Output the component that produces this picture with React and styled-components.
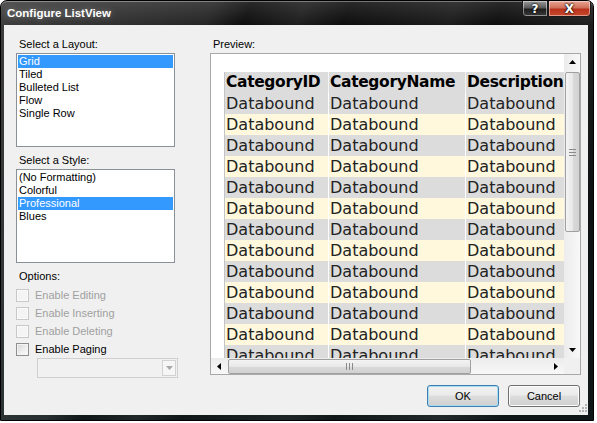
import React from 'react'
import styled, { createGlobalStyle } from 'styled-components'

const layouts = ['Grid', 'Tiled', 'Bulleted List', 'Flow', 'Single Row']
const styles = ['(No Formatting)', 'Colorful', 'Professional', 'Blues']
const options = [
  { label: 'Enable Editing', disabled: true },
  { label: 'Enable Inserting', disabled: true },
  { label: 'Enable Deleting', disabled: true },
  { label: 'Enable Paging', disabled: false },
]
const rows = Array.from({ length: 13 }, (_, i) => i)

const App = () => {
  return (
    <>
      <GlobalStyle />
      <Window>
        <TitleBar>
          <Title>Configure ListView</Title>
          <Caption>
            <CapButton>?</CapButton>
            <CapButton close>X</CapButton>
          </Caption>
        </TitleBar>
        <Body>
          <LeftCol>
            <Label>Select a Layout:</Label>
            <ListBox>
              {layouts.map((l, i) => (
                <Item key={l} selected={i === 0}>{l}</Item>
              ))}
            </ListBox>
            <Label spaced>Select a Style:</Label>
            <ListBox>
              {styles.map(s => (
                <Item key={s} selected={s === 'Professional'}>{s}</Item>
              ))}
            </ListBox>
            <Label spaced>Options:</Label>
            <Options>
              {options.map(o => (
                <CheckRow key={o.label} disabled={o.disabled}>
                  <Box disabled={o.disabled} />
                  {o.label}
                </CheckRow>
              ))}
            </Options>
            <Combo>
              <ComboArrow>
                <svg width="7" height="4" viewBox="0 0 7 4"><path d="M0 0h7L3.5 4z" fill="#a8a8a8" /></svg>
              </ComboArrow>
            </Combo>
          </LeftCol>

          <RightCol>
            <Label>Preview:</Label>
            <Preview>
              <Viewport>
                <Grid>
                  <colgroup>
                    <col style={{ width: 104 }} />
                    <col style={{ width: 137 }} />
                    <col style={{ width: 104 }} />
                  </colgroup>
                  <thead>
                    <tr>
                      <Th>CategoryID</Th>
                      <Th>CategoryName</Th>
                      <Th>Description</Th>
                    </tr>
                  </thead>
                  <tbody>
                    {rows.map(r => (
                      <Tr key={r} alt={r % 2 === 1}>
                        <Td>Databound</Td>
                        <Td>Databound</Td>
                        <Td>Databound</Td>
                      </Tr>
                    ))}
                  </tbody>
                </Grid>
              </Viewport>
              <VScroll>
                <Arrow>
                  <svg width="7" height="4" viewBox="0 0 7 4"><path d="M0 4h7L3.5 0z" fill="#000" /></svg>
                </Arrow>
                <VThumb>
                  <Grip vertical />
                </VThumb>
                <Spacer />
                <Arrow>
                  <svg width="7" height="4" viewBox="0 0 7 4"><path d="M0 0h7L3.5 4z" fill="#000" /></svg>
                </Arrow>
              </VScroll>
              <HScroll>
                <Arrow>
                  <svg width="4" height="7" viewBox="0 0 4 7"><path d="M4 0v7L0 3.5z" fill="#000" /></svg>
                </Arrow>
                <HThumb>
                  <Grip />
                </HThumb>
                <Spacer />
                <Arrow>
                  <svg width="4" height="7" viewBox="0 0 4 7"><path d="M0 0v7L4 3.5z" fill="#000" /></svg>
                </Arrow>
              </HScroll>
              <Corner />
            </Preview>
            <Buttons>
              <Button primary>OK</Button>
              <Button>Cancel</Button>
            </Buttons>
          </RightCol>
          <ResizeGrip>
            <svg width="10" height="10" viewBox="0 0 10 10">
              <g fill="#b4b4b4">
                <rect x="8" y="0" width="2" height="2" />
                <rect x="5" y="3" width="2" height="2" />
                <rect x="8" y="3" width="2" height="2" />
                <rect x="2" y="6" width="2" height="2" />
                <rect x="5" y="6" width="2" height="2" />
                <rect x="8" y="6" width="2" height="2" />
              </g>
            </svg>
          </ResizeGrip>
        </Body>
      </Window>
    </>
  )
}

const GlobalStyle = createGlobalStyle`
  html, body {
    margin: 0;
    padding: 0;
    background: #fff;
  }
  body {
    font-family: "Liberation Sans", Arial, sans-serif;
    font-size: 11px;
    color: #000;
  }
`

const Window = styled.div`
  width: 594px;
  height: 421px;
  box-sizing: border-box;
  padding: 0 5px 5px 3px;
  display: flex;
  flex-direction: column;
  border-radius: 7px 7px 0 0;
  overflow: hidden;
  background:
    linear-gradient(112deg,
      rgba(255,255,255,0.20) 0%, rgba(255,255,255,0.10) 28%,
      rgba(255,255,255,0) 33%, rgba(255,255,255,0.07) 40%,
      rgba(255,255,255,0) 46%, rgba(255,255,255,0.06) 60%,
      rgba(255,255,255,0) 66%, rgba(255,255,255,0.08) 80%,
      rgba(255,255,255,0) 88%),
    linear-gradient(180deg, #2a2a2a 0px, #0c0c0c 25px, #0f1719 100%);
  border: 1px solid #000;
  box-shadow: inset 0 1px 0 rgba(255,255,255,0.35);
`

const TitleBar = styled.div`
  height: 24px;
  display: flex;
  justify-content: space-between;
  align-items: flex-start;
  margin-right: -3px;
`

const Title = styled.div`
  padding: 6px 0 0 3px;
  color: #fff;
  font-weight: bold;
  font-size: 11.5px;
  text-shadow: 0 0 6px rgba(255,255,255,0.35);
`

const Caption = styled.div`
  display: flex;
  margin-top: -1px;
`

const CapButton = styled.div`
  width: ${p => (p.close ? '43px' : '26px')};
  height: 17px;
  box-sizing: border-box;
  display: flex;
  align-items: center;
  justify-content: center;
  color: #fff;
  font-family: "DejaVu Sans", sans-serif;
  font-weight: bold;
  font-size: 12px;
  text-shadow: 0 0 2px #000, 0 0 2px #000;
  border: 1px solid #1a1a1a;
  box-shadow: inset 0 0 0 1px rgba(255,255,255,0.45);
  border-radius: ${p => (p.close ? '0 0 4px 0' : '0 0 0 4px')};
  background: ${p =>
    p.close
      ? 'linear-gradient(180deg, #e8a593 0%, #d0705a 45%, #b8321c 55%, #c94a2c 100%)'
      : 'linear-gradient(180deg, #9a9a9a 0%, #5a5a5a 45%, #1e1e1e 55%, #3a3a3a 100%)'};
`

const Body = styled.div`
  position: relative;
  flex: 1;
  background: #f0f0f0;
  display: grid;
  grid-template-columns: 162px 371px;
  column-gap: 32px;
  padding: 13px 7px 0 12px;
`

const LeftCol = styled.div`
  display: flex;
  flex-direction: column;
`

const RightCol = styled.div`
  display: flex;
  flex-direction: column;
`

const Label = styled.div`
  line-height: 13px;
  margin-top: ${p => (p.spaced ? '7px' : '0')};
  margin-bottom: 2px;
  padding-left: 3px;
`

const ListBox = styled.div`
  height: 94px;
  width: 159px;
  box-sizing: border-box;
  border: 1px solid #8a9098;
  background: #fff;
  padding: 1px;
`

const Item = styled.div`
  height: 13px;
  line-height: 13px;
  padding-left: 1px;
  background: ${p => (p.selected ? '#3399ff' : 'transparent')};
  color: ${p => (p.selected ? '#fff' : '#000')};
`

const Options = styled.div`
  display: flex;
  flex-direction: column;
  margin-top: 1px;
`

const CheckRow = styled.div`
  height: 18px;
  display: flex;
  align-items: center;
  gap: 6px;
  color: ${p => (p.disabled ? '#a0a0a0' : '#000')};
`

const Box = styled.span`
  width: 13px;
  height: 13px;
  box-sizing: border-box;
  border: 1px solid ${p => (p.disabled ? '#c8c8c8' : '#8e8f8f')};
  background: ${p =>
    p.disabled
      ? '#f4f4f4'
      : 'linear-gradient(135deg, #d6d6d6 0%, #f0f0f0 60%, #fafafa 100%)'};
  box-shadow: inset 0 0 0 1px ${p => (p.disabled ? '#fafafa' : '#f4f4f4')};
`

const Combo = styled.div`
  margin: 0 0 0 21px;
  width: 141px;
  height: 20px;
  box-sizing: border-box;
  border: 1px solid #cfcfcf;
  background: #f1f1f1;
  display: flex;
  justify-content: flex-end;
  align-items: center;
  padding-right: 1px;
`

const ComboArrow = styled.div`
  width: 14px;
  height: 16px;
  box-sizing: border-box;
  border: 1px solid #d2d2d2;
  background: #f6f6f6;
  display: flex;
  align-items: center;
  justify-content: center;
`

const Preview = styled.div`
  height: 322px;
  box-sizing: border-box;
  border: 1px solid #a8a8a8;
  background: #fff;
  display: grid;
  grid-template-columns: 1fr 16px;
  grid-template-rows: 1fr 16px;
`

const Viewport = styled.div`
  overflow: hidden;
  padding: 18px 0 0 13px;
`

const Grid = styled.table`
  table-layout: fixed;
  width: 345px;
  border-collapse: collapse;
  font-family: "DejaVu Sans", Verdana, sans-serif;
  font-size: 16px;
  line-height: 21px;
  white-space: nowrap;
  border-left: 1px solid #c4c4c4;
`

const Th = styled.th`
  background: #dcdcdc;
  color: #000;
  font-weight: bold;
  font-size: 15.5px;
  text-align: left;
  letter-spacing: -0.35px;
  padding: 0 0 0 1px;
  border-right: 1px solid #f4f4f4;
  overflow: hidden;
`

const Tr = styled.tr`
  background: ${p => (p.alt ? '#fff8dc' : '#dcdcdc')};
`

const Td = styled.td`
  color: #222;
  padding: 0 0 0 1px;
  border-right: 1px solid rgba(255,255,255,0.6);
  overflow: hidden;
`

const VScroll = styled.div`
  display: flex;
  flex-direction: column;
  align-items: center;
  background: linear-gradient(90deg, #ececec, #f8f8f8);
`

const HScroll = styled.div`
  display: flex;
  align-items: center;
  background: linear-gradient(180deg, #ececec, #f8f8f8);
`

const Arrow = styled.div`
  width: 16px;
  height: 16px;
  flex: none;
  display: flex;
  align-items: center;
  justify-content: center;
`

const Spacer = styled.div`
  flex: 1;
`

const VThumb = styled.div`
  margin-top: 2px;
  width: 15px;
  height: 160px;
  box-sizing: border-box;
  border: 1px solid #a0a0a0;
  border-radius: 2px;
  background: linear-gradient(90deg, #f4f4f4 0%, #e8e8e8 50%, #d9d9d9 51%, #d2d2d2 100%);
  display: flex;
  align-items: center;
  justify-content: center;
`

const HThumb = styled.div`
  margin-left: 1px;
  width: 243px;
  height: 15px;
  box-sizing: border-box;
  border: 1px solid #a0a0a0;
  border-radius: 2px;
  background: linear-gradient(180deg, #f4f4f4 0%, #e8e8e8 50%, #d9d9d9 51%, #d2d2d2 100%);
  display: flex;
  align-items: center;
  justify-content: center;
`

const Grip = styled.div`
  width: 7px;
  height: 7px;
  background: ${p =>
    p.vertical
      ? 'repeating-linear-gradient(180deg, #8a8a8a 0 1px, transparent 1px 3px)'
      : 'repeating-linear-gradient(90deg, #8a8a8a 0 1px, transparent 1px 3px)'};
`

const Corner = styled.div`
  background: #f0f0f0;
`

const Buttons = styled.div`
  display: flex;
  justify-content: flex-end;
  gap: 9px;
  margin-top: 10px;
  padding-right: 1px;
`

const Button = styled.div`
  width: 72px;
  height: 22px;
  box-sizing: border-box;
  display: flex;
  align-items: center;
  justify-content: center;
  border: 1px solid ${p => (p.primary ? '#3c7fb1' : '#707070')};
  border-radius: 3px;
  background: linear-gradient(180deg, #f2f2f2 0%, #ebebeb 45%, #dddddd 50%, #cfcfcf 100%);
  box-shadow: inset 0 0 0 1px ${p => (p.primary ? '#a8dcf0' : '#fcfcfc')};
`

const ResizeGrip = styled.div`
  position: absolute;
  right: 1px;
  bottom: 1px;
  line-height: 0;
`

export default App
